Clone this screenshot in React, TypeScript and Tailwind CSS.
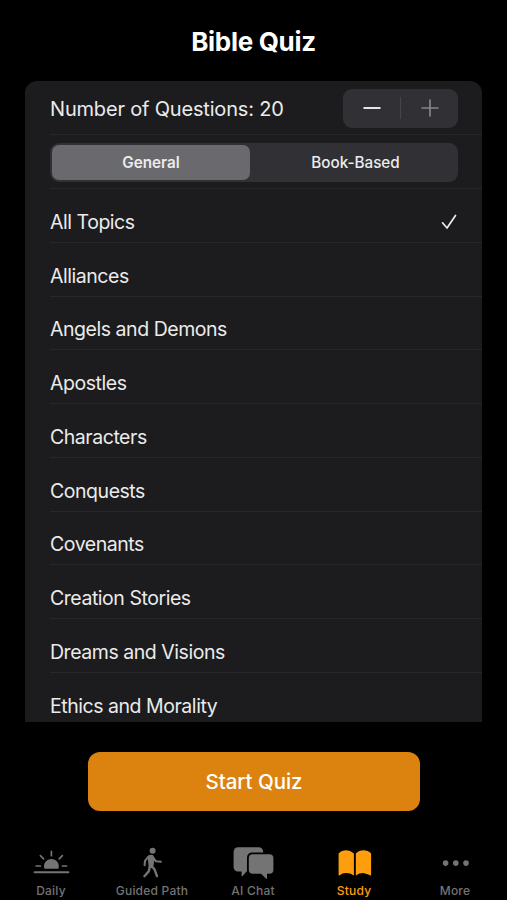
import { useState } from "react";
import type { ReactNode } from "react";
import clsx from "clsx";

// Quiz topics shown in the list
const topics = [
    "All Topics",
    "Alliances",
    "Angels and Demons",
    "Apostles",
    "Characters",
    "Conquests",
    "Covenants",
    "Creation Stories",
    "Dreams and Visions",
    "Ethics and Morality",
];

// Mode switch entries with the space each one takes
const modes = [
    { label: "General", className: "w-[198px]" },
    { label: "Book-Based", className: "flex-1 pl-[5px]" },
];

const MAX_QUESTIONS = 20;

const TabIcon = ({ children }: { children: ReactNode }) => (
    <svg viewBox="0 0 40 32" className="w-10 h-8 overflow-visible" fill="none" strokeLinecap="round" strokeLinejoin="round">
        {children}
    </svg>
);

const SunIcon = () => (
    <TabIcon>
        <path d="M13.4 21.8A7.4 7.4 0 1 1 27.4 21.8z" fill="currentColor" />
        <path d="M20.4 4.4v4.3M9.4 8.6l3.2 3.2M31.4 8.6L28.2 11.8M5.2 19h4.2M31.4 19h4.2" stroke="currentColor" strokeWidth="1.7" />
        <path d="M3.6 25.2h33.8" stroke="currentColor" strokeWidth="2" />
    </TabIcon>
);

const WalkIcon = () => (
    <TabIcon>
        <circle cx="20.6" cy="3.7" r="3" fill="currentColor" />
        <path d="M16.4 9.4Q18.5 7.8 20.8 9L21.6 11.5 20.8 18.5 17.4 19.2z" fill="currentColor" stroke="currentColor" strokeWidth="1.6" />
        <path d="M16 10.2L13 13.8L12.6 18.2M21.2 10.6L24 14.3L28.9 14.7" stroke="currentColor" strokeWidth="2.1" />
        <path d="M19.4 18.8L22.6 22.6L25 29.2M17.8 19.5L16.9 24.1L12.4 29.2" stroke="currentColor" strokeWidth="2.4" />
    </TabIcon>
);

const ChatIcon = () => (
    <TabIcon>
        <path
            d="M5 .3H25.8a4.4 4.4 0 0 1 4.4 4.4V5.5H19a5 5 0 0 0-5 5V24L9.6 28.9Q8.6 29.8 8.6 28.4V24.6H5A4.4 4.4 0 0 1 .6 20.2V4.7A4.4 4.4 0 0 1 5 .3z"
            fill="currentColor"
        />
        <path
            d="M19.8 7.2H36.4a4 4 0 0 1 4 4V22.8a4 4 0 0 1-4 4H34V30.9Q34 32.3 32.9 31.4L28 26.8H19.8a4 4 0 0 1-4-4V11.2a4 4 0 0 1 4-4z"
            fill="currentColor"
        />
    </TabIcon>
);

const BookIcon = () => (
    <TabIcon>
        <path d="M4.6 6.5Q7.7 3.3 12.1 3.3T19.9 6.5V28.4Q16.4 26.1 12.1 26.1T5.9 28.3Q4.6 29 4.6 27.6z" fill="currentColor" />
        <path d="M21.8 6.5Q25.1 3.3 29.5 3.3T37.1 6.5V27.6Q37.1 29 35.8 28.3T29.5 26.1Q25.2 26.1 21.8 28.4z" fill="currentColor" />
    </TabIcon>
);

const MoreIcon = () => (
    <TabIcon>
        <circle cx="10.6" cy="16.1" r="2.8" fill="currentColor" />
        <circle cx="20.8" cy="16.1" r="2.8" fill="currentColor" />
        <circle cx="31" cy="16.1" r="2.8" fill="currentColor" />
    </TabIcon>
);

const tabs = [
    { label: "Daily", icon: SunIcon },
    { label: "Guided Path", icon: WalkIcon },
    { label: "AI Chat", icon: ChatIcon },
    { label: "Study", icon: BookIcon },
    { label: "More", icon: MoreIcon },
];

const App = () => {
    const [count, setCount] = useState(20);
    const [mode, setMode] = useState("General");
    const [topic, setTopic] = useState("All Topics");
    const [activeTab, setActiveTab] = useState("Study");

    return (
        <div className="flex h-[900px] w-[507px] flex-col overflow-hidden bg-black font-['Inter',sans-serif] text-white">
            {/* Title */}
            <h1 className="flex h-[81px] shrink-0 items-center justify-center pt-px text-[26px] font-bold tracking-[-0.3px]">
                Bible Quiz
            </h1>

            {/* Quiz options */}
            <div className="mx-[25px] h-[641px] shrink-0 overflow-hidden rounded-t-xl bg-[#1c1c1e]">
                {/* Question count stepper */}
                <div className="ml-[25px] flex h-[54px] items-center justify-between border-b border-[#27272a] pt-px pr-6">
                    <span className="pt-px text-[20px] tracking-[-0.18px] text-[#ebebeb]">Number of Questions: {count}</span>
                    <div className="flex h-[39px] w-[115px] items-center rounded-[9px] bg-[#313135]">
                        <button
                            aria-label="Fewer questions"
                            className="flex flex-1 justify-center text-[#e6e6e8]"
                            onClick={() => setCount(Math.max(1, count - 1))}
                        >
                            <svg width="18" height="18" viewBox="0 0 18 18" stroke="currentColor" strokeWidth="2">
                                <path d="M.5 9h17" />
                            </svg>
                        </button>
                        <span className="h-[22px] w-px bg-[#454549]" />
                        <button
                            aria-label="More questions"
                            className={clsx("flex flex-1 justify-center", count < MAX_QUESTIONS ? "text-[#e6e6e8]" : "text-[#85858a]")}
                            onClick={() => setCount(Math.min(MAX_QUESTIONS, count + 1))}
                        >
                            <svg width="18" height="18" viewBox="0 0 18 18" stroke="currentColor" strokeWidth="1.7">
                                <path d="M.5 9h17M9 .5v17" />
                            </svg>
                        </button>
                    </div>
                </div>

                {/* Mode switch */}
                <div className="ml-[25px] flex h-[54px] items-center border-b border-[#27272a] pt-[2px] pr-6">
                    <div className="flex h-[39px] w-full rounded-[9px] bg-[#313135] p-[2px]">
                        {modes.map(({ label, className }) => (
                            <button
                                key={label}
                                onClick={() => setMode(label)}
                                className={clsx(
                                    "rounded-[7px] pt-[2px] text-[15.25px] text-[#ececec]",
                                    className,
                                    mode === label ? "bg-[#69696e] font-semibold" : "font-medium"
                                )}
                            >
                                {label}
                            </button>
                        ))}
                    </div>
                </div>

                {/* Topic list */}
                <ul>
                    {topics.map((item) => (
                        <li
                            key={item}
                            onClick={() => setTopic(item)}
                            className="ml-[25px] flex h-[53.75px] items-center justify-between border-b border-[#27272a] pt-[14px] pr-[25px] text-[19.5px] tracking-[-0.46px] text-[#ebebeb]"
                        >
                            {item}
                            {topic === item && (
                                <svg width="16" height="16" viewBox="0 0 16 16" fill="none" stroke="currentColor" strokeWidth="1.7" strokeLinecap="round" strokeLinejoin="round">
                                    <path d="M1.5 8.8L6 14L14.5 1.5" />
                                </svg>
                            )}
                        </li>
                    ))}
                </ul>
            </div>

            <button className="mt-[30px] ml-[88px] h-[59px] w-[332px] shrink-0 rounded-xl bg-[#dc820e] pt-[2px] text-[20.5px] font-medium tracking-[-0.05px]">
                Start Quiz
            </button>

            {/* Bottom tab bar */}
            <nav className="mt-auto flex h-[53px] shrink-0">
                {tabs.map(({ label, icon: Icon }) => (
                    <button
                        key={label}
                        onClick={() => setActiveTab(label)}
                        className={clsx(
                            "flex w-[101px] flex-col items-center text-[12px] leading-[24px] font-medium tracking-[0.22px]",
                            activeTab === label ? "text-[#fe9e0c]" : "text-[#747474]"
                        )}
                    >
                        <Icon />
                        <span className="pl-px">{label}</span>
                    </button>
                ))}
            </nav>
        </div>
    );
};

export default App;
